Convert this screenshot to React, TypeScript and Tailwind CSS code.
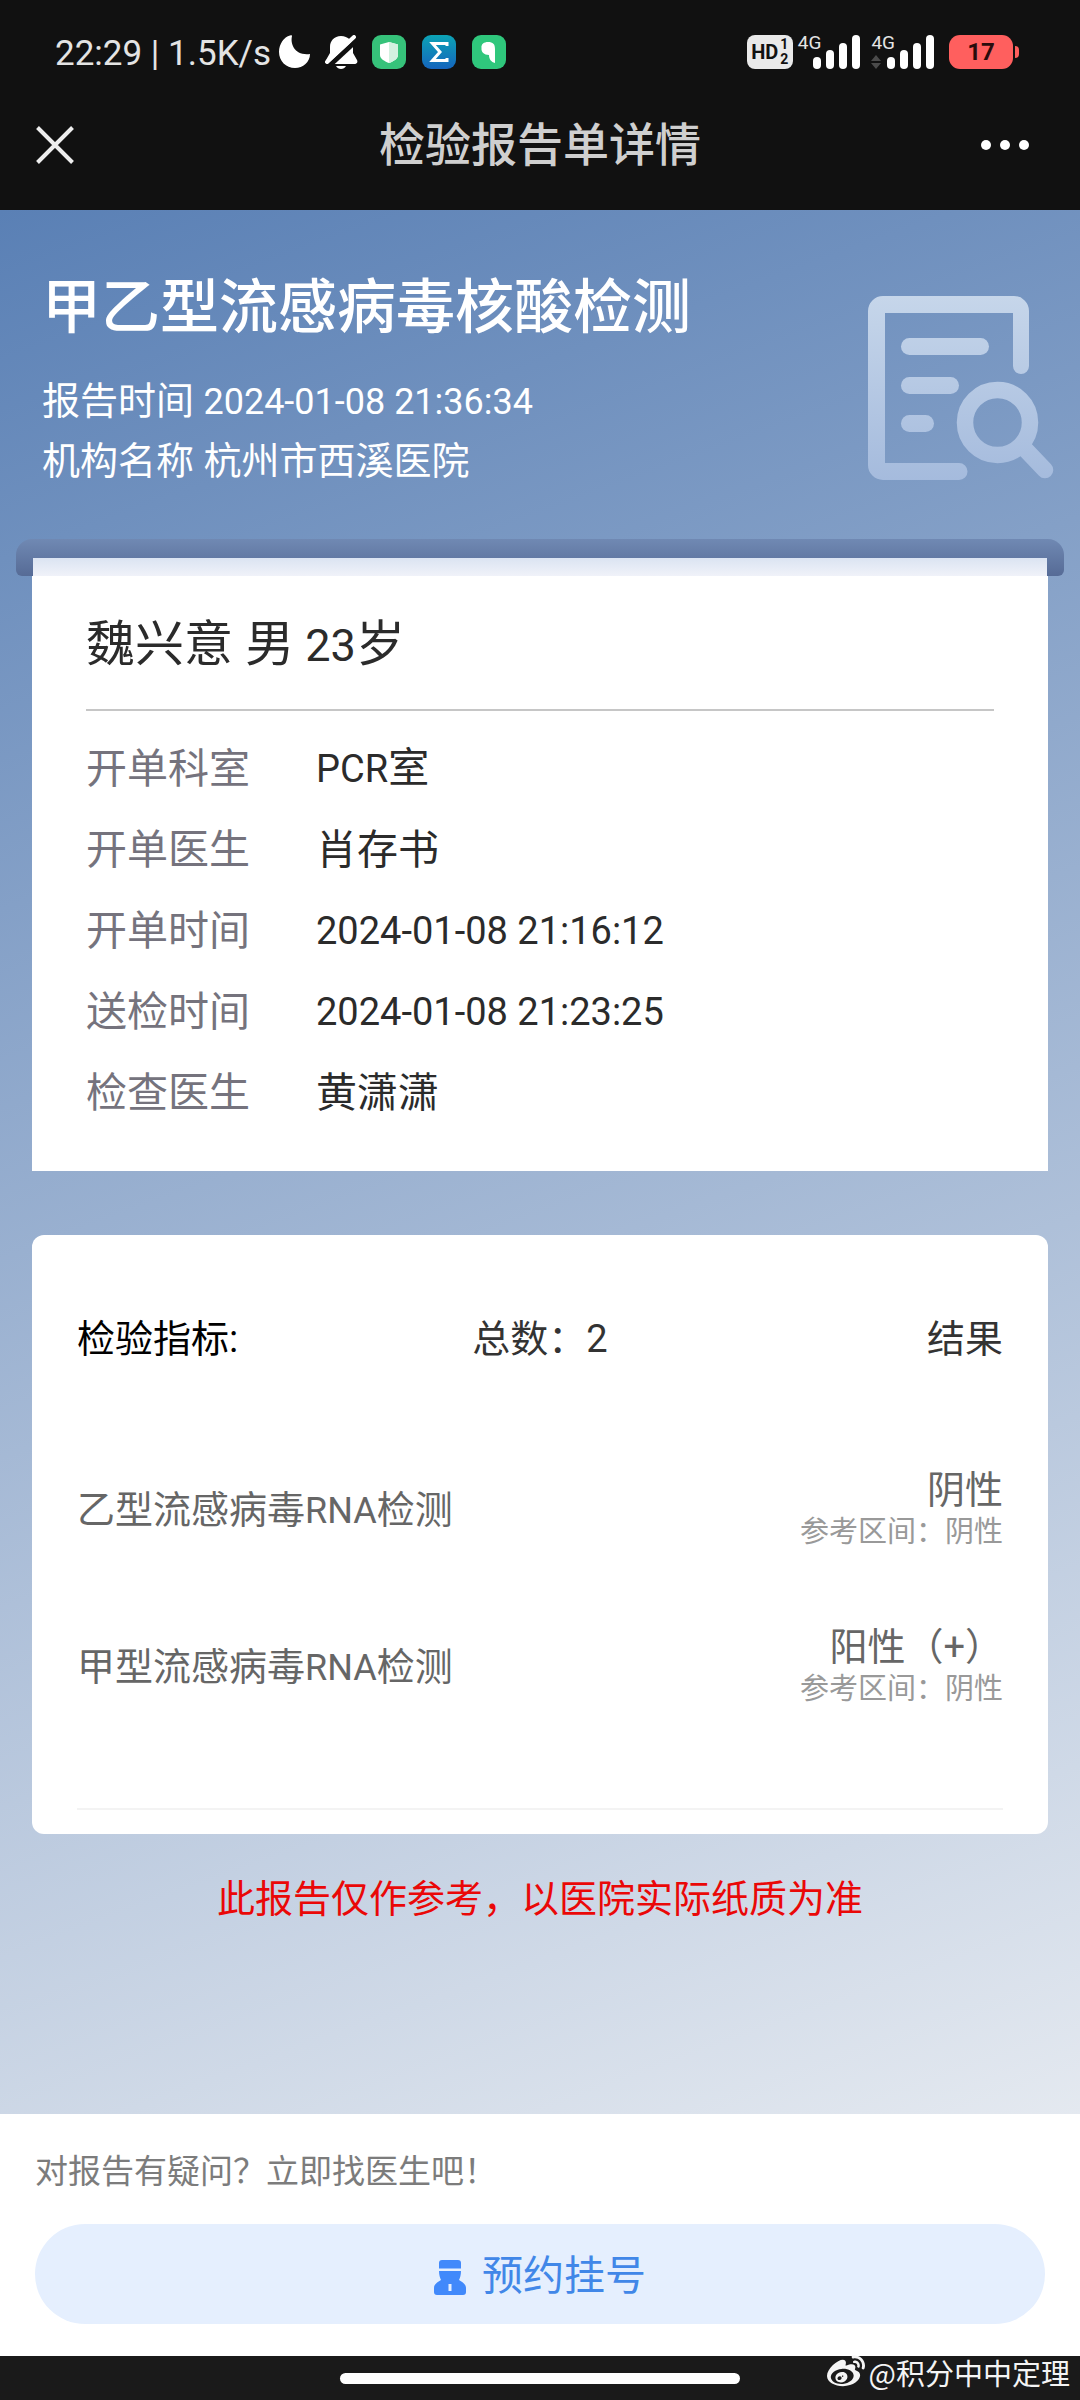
import type { ReactNode } from 'react';
import { FaWeibo } from 'react-icons/fa';

const details: { label: string; value: ReactNode }[] = [
  { label: '开单科室', value: <><Latin>PCR</Latin>室</> },
  { label: '开单医生', value: '肖存书' },
  { label: '开单时间', value: <Latin>2024-01-08 21:16:12</Latin> },
  { label: '送检时间', value: <Latin>2024-01-08 21:23:25</Latin> },
  { label: '检查医生', value: '黄潇潇' },
];

const results = [
  { prefix: '乙型流感病毒', result: '阴性', range: '阴性' },
  { prefix: '甲型流感病毒', result: '阳性（+）', range: '阴性' },
];

function Latin({ children }: { children: ReactNode }) {
  return <span className="text-[38px]">{children}</span>;
}

function SignalBars() {
  return (
    <svg className="h-[34px] w-[47px]" viewBox="0 0 47 34" fill="#fff" aria-hidden="true">
      <rect x="0" y="22" width="8" height="12" rx="4" />
      <rect x="13" y="15" width="8" height="19" rx="4" />
      <rect x="26" y="8" width="8" height="26" rx="4" />
      <rect x="39" y="0" width="8" height="34" rx="4" />
    </svg>
  );
}

function StatusBar() {
  return (
    <div className="flex h-[104px] items-center justify-between pr-[61px] pl-[55px]">
      <div className="flex items-center">
        <span className="pt-1 text-[35px] whitespace-pre text-[#e4e4e4]">22:29 | 1.5K/s</span>
        <svg className="ml-2 h-[34px] w-[32px]" viewBox="0 0 32 34" fill="#fff" aria-hidden="true">
          <path d="M13 1C11 9 16 21 31 19C31 27 24 33 16 33C7 33 0 26 0 17C0 9 5 2 11 0.500C12.500 0.200 13.200 0.200 13 1Z" />
        </svg>
        <svg className="ml-3.5 h-[34px] w-[33px]" viewBox="0 0 33 34" aria-hidden="true">
          <path
            d="M16 1C9 1 5 6 5 12V18L1 25C0 27 1 29 3 29H29C32 29 33 27 32 25L28 18V12C28 6 23 1 16 1Z"
            fill="#fff"
          />
          <path d="M11 31H21C20 33 18 34 16 34S12 33 11 31Z" fill="#fff" />
          <path d="M4 31L33 4" stroke="#111" strokeWidth="5" />
          <path d="M2 27L29 2" stroke="#fff" strokeWidth="4" strokeLinecap="round" />
        </svg>
        <svg className="ml-3.5 h-[34px] w-[34px]" viewBox="0 0 34 34" aria-hidden="true">
          <rect width="34" height="34" rx="9" fill="#36c27a" />
          <path d="M17 7L26 9.500V20C26 24 21 26.500 17 28C13 26.500 8 24 8 20V9.500Z" fill="#fff" />
          <path d="M17 7L26 9.500V20C26 24 21 26.500 17 28Z" fill="#d3f1e0" />
        </svg>
        <svg className="ml-4 h-[34px] w-[34px]" viewBox="0 0 34 34" aria-hidden="true">
          <defs>
            <linearGradient id="sigma" x1="0" y1="0" x2="0" y2="1">
              <stop offset="0" stopColor="#0ca3b5" />
              <stop offset="1" stopColor="#1565bd" />
            </linearGradient>
          </defs>
          <rect width="34" height="34" rx="9" fill="url(#sigma)" />
          <path d="M25 11V8.500H10.500L18 17L10.500 25.500H25V23" fill="none" stroke="#fff" strokeWidth="3" />
        </svg>
        <svg className="ml-4 h-[34px] w-[34px]" viewBox="0 0 34 34" aria-hidden="true">
          <rect width="34" height="34" rx="9" fill="#2fc77c" />
          <path d="M16 7C21 7 23 9 23 14V28C19 27 17 24 17 20C12 20 9 17 9.500 13C9 9 12 7 16 7Z" fill="#fff" />
        </svg>
      </div>

      <div className="flex items-center">
        <div className="flex h-[34px] w-[46px] items-center justify-center gap-0.5 rounded-lg bg-[#e9e9e9] font-bold text-[#111]">
          <span className="text-[20px] leading-none">HD</span>
          <span className="flex flex-col text-[14px] leading-[15px]">
            <span>1</span>
            <span>2</span>
          </span>
        </div>
        <div className="ml-[5px] flex">
          <span className="-mr-2 h-[34px] text-[19px] leading-4 text-[#e4e4e4]">4G</span>
          <SignalBars />
        </div>
        <div className="relative ml-[11px] flex">
          <span className="-mr-2 h-[34px] text-[19px] leading-4 text-[#e4e4e4]">4G</span>
          <SignalBars />
          <svg className="absolute bottom-0 left-0 h-[14px] w-[10px]" viewBox="0 0 10 14" fill="#4b4b4b" aria-hidden="true">
            <path d="M5 0L10 6H0ZM5 14L0 8H10Z" />
          </svg>
        </div>
        <div className="ml-[15px] flex h-[34px] w-[64px] items-center justify-center rounded-[11px] bg-[#ff5f5e] text-[24px] leading-none font-bold text-[#2a0c0c]">
          17
        </div>
        <div className="ml-0.5 h-[12px] w-[4px] rounded-r-full bg-[#ff5f5e]" />
      </div>
    </div>
  );
}

function ReportIcon() {
  return (
    <svg className="mt-6 h-[184px] w-[186px] shrink-0" viewBox="0 0 186 184" aria-hidden="true">
      <defs>
        <linearGradient id="sheet" gradientUnits="userSpaceOnUse" x1="0" y1="0" x2="0" y2="184">
          <stop offset="0" stopColor="#c6d6ea" />
          <stop offset="1" stopColor="#a5bbdd" />
        </linearGradient>
      </defs>
      <g fill="url(#sheet)">
        <path d="M15 0H146a15 15 0 0 1 15 15V70a8 8 0 0 1-16 0V17H17V167H91a8.500 8.500 0 0 1 0 17H15a15 15 0 0 1-15-15V15a15 15 0 0 1 15-15Z" />
        <rect x="33" y="42" width="88" height="17" rx="8.500" />
        <rect x="33" y="81" width="58" height="17" rx="8.500" />
        <rect x="33" y="119" width="33" height="17" rx="8.500" />
      </g>
      <g fill="none" stroke="url(#sheet)" strokeWidth="16.500" strokeLinecap="round">
        <circle cx="129.500" cy="126.500" r="32.500" />
        <path d="M157 153L177 174" />
      </g>
    </svg>
  );
}

function DoctorIcon() {
  return (
    <svg className="h-[35px] w-[32px]" viewBox="0 0 32 35" fill="#4189fb" aria-hidden="true">
      <path d="M8 0H24a3 3 0 0 1 3 3V8.500H5V3a3 3 0 0 1 3-3Z" />
      <path
        fillRule="evenodd"
        d="M5 11H27C27 15 26 18 25 20C28 22 32 24 32 28V32a3 3 0 0 1-3 3H3a3 3 0 0 1-3-3V28C0 24 4 22 7 20C6 18 5 15 5 11ZM14.500 24V31H17.500V24Z"
      />
    </svg>
  );
}

export default function App() {
  return (
    <div className="flex min-h-screen flex-col bg-[#111] font-[Roboto,'Noto_Sans_CJK_SC',sans-serif]">
      <header className="pb-6">
        <StatusBar />
        <div className="grid h-[82px] grid-cols-[1fr_auto_1fr] items-center px-9">
          <button type="button" aria-label="关闭" className="justify-self-start">
            <svg className="h-[38px] w-[38px]" viewBox="0 0 38 38" stroke="#eee" strokeWidth="4" aria-hidden="true">
              <path d="M1.500 1.500L36.500 36.500M36.500 1.500L1.500 36.500" />
            </svg>
          </button>
          <h1 className="text-[46px] leading-[60px] font-medium text-[#cfcfcf]">检验报告单详情</h1>
          <button type="button" aria-label="更多" className="mr-[15px] flex gap-[9px] justify-self-end">
            <span className="size-2.5 rounded-full bg-white" />
            <span className="size-2.5 rounded-full bg-white" />
            <span className="size-2.5 rounded-full bg-white" />
          </button>
        </div>
      </header>

      <main className="flex-1 bg-[linear-gradient(160deg,#5a80b5,#e4e9f0)] pb-10">
        <section className="flex items-start justify-between pt-[62px] pr-[26px] pl-[42px] text-white">
          <div>
            <h2 className="text-[59px] leading-[72px] font-medium">甲乙型流感病毒核酸检测</h2>
            <div className="mt-7 text-[38px] leading-[59px]">
              <p>
                报告时间 <span className="text-[36px]">2024-01-08 21:36:34</span>
              </p>
              <p>机构名称 杭州市西溪医院</p>
            </div>
          </div>
          <ReportIcon />
        </section>

        <div className="mx-4 mt-12 rounded-t-2xl rounded-b-md bg-linear-to-b from-[#7089b3] to-[#566b96] px-[17px] pt-[19px]">
          <div className="h-[18px] bg-linear-to-b from-[#dbe4f2] to-[#f0f2f9]" />
        </div>

        <section className="mx-8 bg-white px-[54px] pt-[34px] pb-[38px] text-[#2b2b2b]">
          <h3 className="border-b-2 border-[#c6c6c6] pb-7 text-[49px] leading-[70px]">
            魏兴意 男<span className="text-[45px]"> 23</span>岁
          </h3>
          <dl className="mt-[17px] text-[41px] leading-[60px]">
            {details.map((item) => (
              <div key={item.label} className="flex h-[81px] items-center">
                <dt className="w-[230px] text-[#75737d]">{item.label}</dt>
                <dd>{item.value}</dd>
              </div>
            ))}
          </dl>
        </section>

        <section className="mx-8 mt-16 rounded-xl bg-white px-[45px] pt-2.5 pb-6">
          <table className="w-full table-fixed text-[38px] leading-[48px]">
            <thead>
              <tr className="h-[187px] text-[#333]">
                <th className="text-left font-normal text-black">检验指标:</th>
                <th className="text-center font-normal">总数：2</th>
                <th className="text-right font-normal">结果</th>
              </tr>
            </thead>
            <tbody className="text-[#666]">
              {results.map((row) => (
                <tr key={row.prefix} className="h-[157px]">
                  <td colSpan={2}>
                    {row.prefix}
                    <span className="text-[36px]">RNA</span>检测
                  </td>
                  <td className="pb-1.5 text-right whitespace-nowrap">
                    <p>{row.result}</p>
                    <p className="text-[29px] leading-9 text-[#999]">参考区间：{row.range}</p>
                  </td>
                </tr>
              ))}
            </tbody>
          </table>
          <hr className="mt-[62px] border-t-2 border-[#f3f3f3]" />
        </section>

        <p className="mt-10 text-center text-[38px] leading-[50px] text-[#ea0808]">
          此报告仅作参考，以医院实际纸质为准
        </p>
      </main>

      <footer>
        <div className="bg-white px-[35px] pt-[33px] pb-8">
          <p className="text-[33px] leading-[50px] text-[#7c7c7c]">对报告有疑问？立即找医生吧！</p>
          <button
            type="button"
            className="mt-[27px] flex h-[100px] w-full items-center justify-center gap-4 rounded-full bg-[#e5effe] pt-1.5 text-[41px] text-[#4187e8]"
          >
            <DoctorIcon />
            预约挂号
          </button>
        </div>
        <div className="relative flex h-11 items-center justify-center bg-[#1a1a1a]">
          <div className="h-[11px] w-[37%] rounded-full bg-white" />
          <div className="absolute top-0 right-[10px] flex items-center gap-1 font-['Noto_Sans_CJK_SC',sans-serif] text-[29px] leading-8 text-[#f4f4f4]">
            <FaWeibo className="-my-1 size-[38px]" aria-hidden="true" />
            @积分中中定理
          </div>
        </div>
      </footer>
    </div>
  );
}
